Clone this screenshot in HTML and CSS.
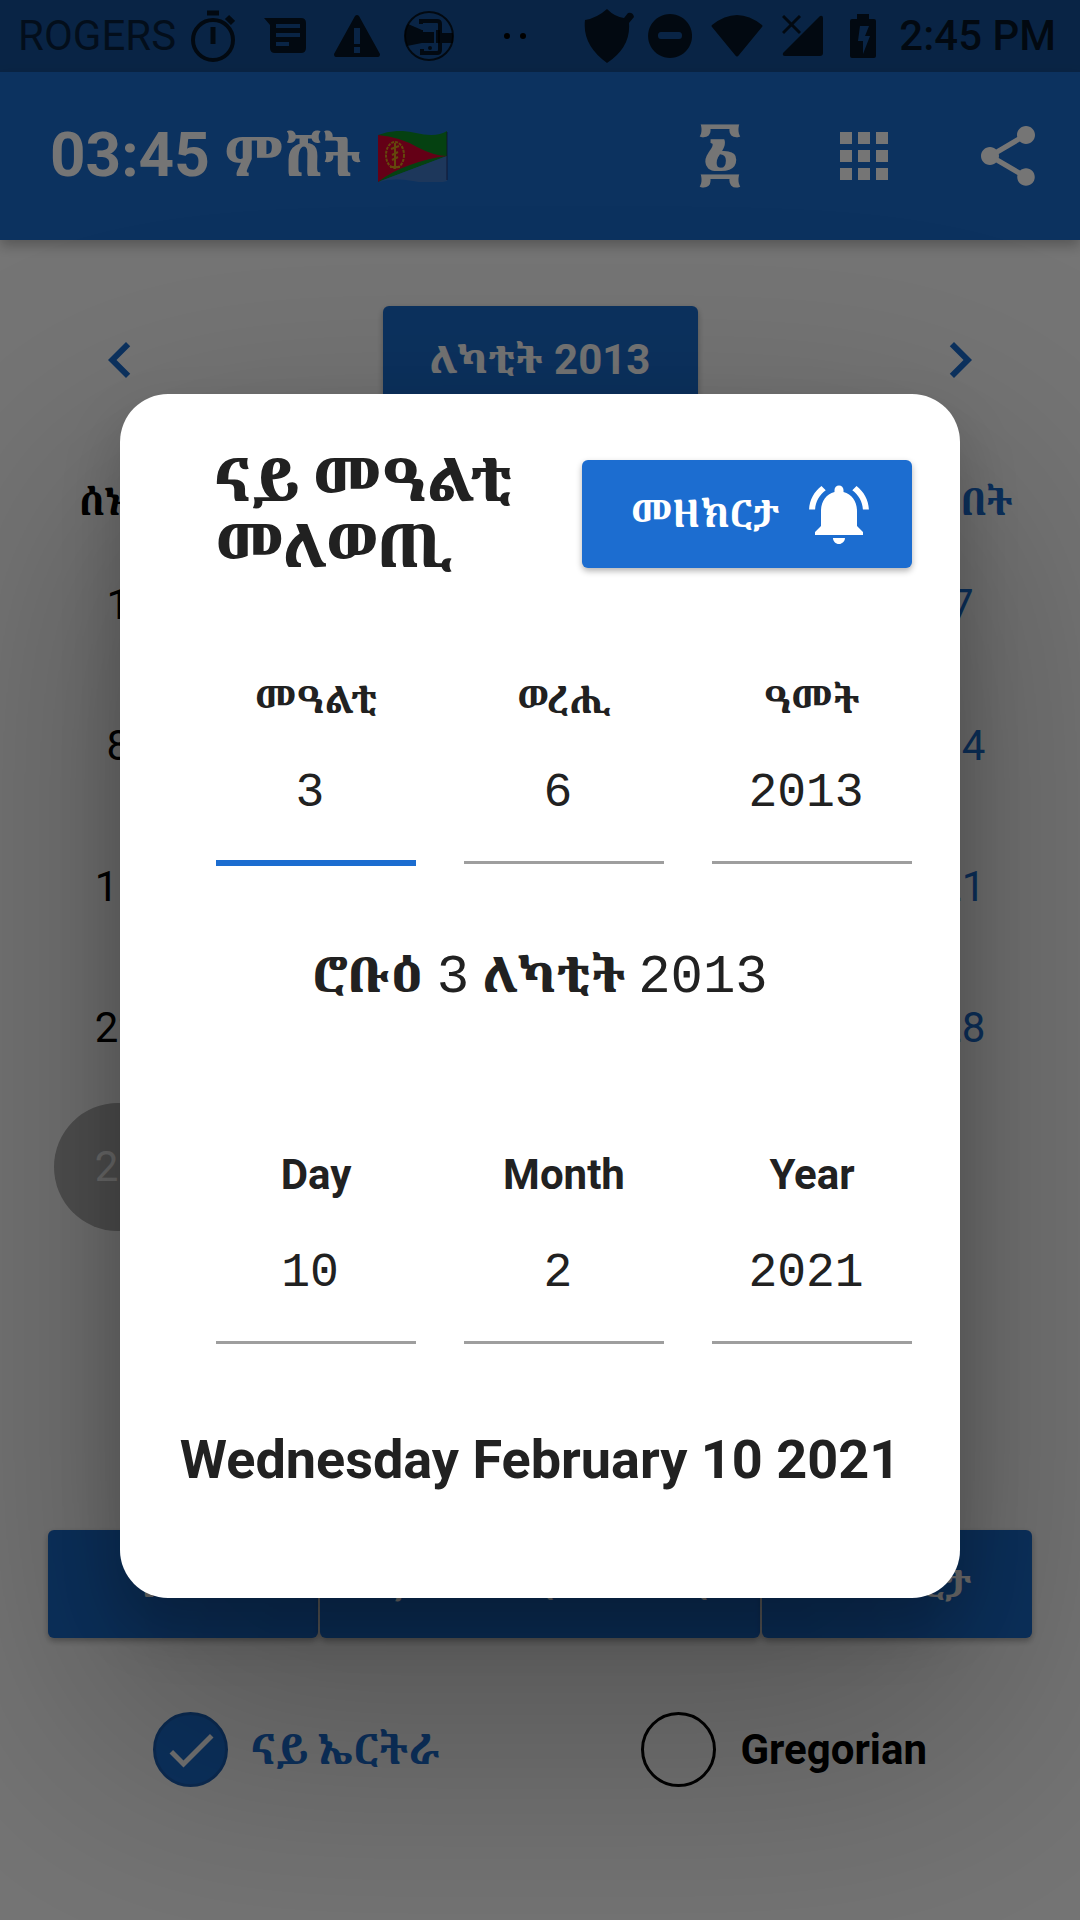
FILE: index.html
```html
<!DOCTYPE html>
<html lang="ti">
<head>
<meta charset="utf-8">
<meta name="viewport" content="width=device-width, initial-scale=1">
<title>ናይ መዓልቲ መለወጢ</title>
<link rel="stylesheet" href="styles.css">
</head>
<body>
<div class="screen">
  <div class="status-bar">
    <span class="carrier">ROGERS</span>
    <svg class="status-icon timer" viewBox="0 0 44 54" aria-hidden="true"><g fill="none" stroke="currentColor" stroke-width="4"><circle cx="22" cy="31" r="20"/><path d="M22 18v17M16 4h12" stroke-width="5"/><path d="M36 8l6 6" stroke-width="6"/></g></svg>
    <svg class="status-icon message" viewBox="0 0 42 36" aria-hidden="true"><path fill="currentColor" fill-rule="evenodd" d="M0 0h37q5 0 5 5v25q0 5-5 5H11q-5 0-5-5V7zM12 6v4h24V6zm0 9v4h24v-4zm0 9v4h13v-4z"/></svg>
    <svg class="status-icon warning" viewBox="0 0 46 42" aria-hidden="true"><path fill="currentColor" fill-rule="evenodd" d="M21 1q2-2 4 0l21 38q0 3-2 3H2q-2 0-2-3zM20 13v16h6V13zm0 19v6h6v-6z"/></svg>
    <svg class="status-icon face" viewBox="0 0 50 50" aria-hidden="true"><circle cx="25" cy="25" r="24" fill="none" stroke="currentColor" stroke-width="2"/><path fill="currentColor" d="M4 13l14 6h18v13H18L3 35Q-2 23 4 13zm34 9h11v10H38z"/><path fill="none" stroke="currentColor" stroke-width="4" d="M17 13v-3h16q3 0 3 3v26q0 3-3 3H18v-4"/><path fill="none" stroke="#155096" stroke-width="2" d="M19 20h12v12"/><circle cx="26" cy="37" r="2" fill="currentColor"/></svg>
    <svg class="dots" viewBox="0 0 22 6" aria-hidden="true"><circle cx="3" cy="3" r="3"/><circle cx="19" cy="3" r="3"/></svg>
    <span class="status-gap"></span>
    <svg class="status-icon shield" viewBox="0 0 50 54" aria-hidden="true"><path fill="currentColor" d="M23 0q8 8 17 9l4-5q5-1 6 4l-5 6q2 24-22 40Q-2 36 1 11 13 9 23 0z"/></svg>
    <svg class="status-icon dnd" viewBox="0 0 44 44" aria-hidden="true"><path fill="currentColor" fill-rule="evenodd" d="M22 0a22 22 0 1 0 .1 0zM13 18h18q3 0 3 3.500t-3 3.500H13q-3 0-3-3.500t3-3.500z"/></svg>
    <svg class="status-icon wifi" viewBox="0 0 52 42" aria-hidden="true"><path fill="currentColor" d="M1 10Q26-10 51 10q1 1 0 2L28 40q-2 3-4 0L1 12q-1-1 0-2z"/></svg>
    <svg class="status-icon signal" viewBox="0 0 42 42" aria-hidden="true"><path fill="currentColor" d="M38 1q3-1 3 2v35q0 3-3 3H3q-3 0-2-3z"/><path stroke="currentColor" stroke-width="3" d="M1 1l17 17M18 1L1 18"/></svg>
    <svg class="status-icon battery" viewBox="0 0 26 44" aria-hidden="true"><path fill="currentColor" fill-rule="evenodd" d="M7 0h12v5h5q2 0 2 2v35q0 2-2 2H2q-2 0-2-2V7q0-2 2-2h5zm3 12L8 27h5v13l7-18h-5l4-10z"/></svg>
    <span class="clock">2:45 PM</span>
  </div>

  <header class="app-bar">
    <h1 class="app-title">03:45 <span class="geez">ምሸት</span></h1>
    <svg class="flag" viewBox="0 0 70 51" role="img" aria-label="Eritrea"><path fill="#0d8f26" d="M0 4Q18-3 38 2t31-2v25L0 51z"/><path fill="#4079c6" d="M0 51L69 25v25q-14 4-34 0T0 51z"/><path fill="#db0030" d="M0 4q22 2 39 12 17 9 30 9-18 2-37 9Q14 40 0 51z"/><ellipse cx="17" cy="24" rx="9" ry="13" fill="none" stroke="#d99b1c" stroke-width="2" stroke-dasharray="3 1"/><path d="M17 12v25M13 18l8-3M14 24l6-3M14 29l6-3M12 36h10" stroke="#d99b1c" stroke-width="2"/><path d="M69 1v48" stroke="#225" stroke-opacity=".4" stroke-width="2"/></svg>
    <button class="icon-button numeral" aria-label="ቁጽሪ">፩</button>
    <button class="icon-button" aria-label="Apps"><svg viewBox="0 0 24 24"><path d="M4 8h4V4H4zm6 12h4v-4h-4zm-6 0h4v-4H4zm0-6h4v-4H4zm6 0h4v-4h-4zm6-10v4h4V4zm-6 4h4V4h-4zm6 6h4v-4h-4zm0 6h4v-4h-4z"/></svg></button>
    <button class="icon-button" aria-label="Share"><svg viewBox="0 0 24 24"><path d="M18 16.080c-.76 0-1.440.3-1.960.77L8.910 12.700c.05-.23.09-.46.09-.7s-.04-.47-.09-.7l7.050-4.110c.54.5 1.250.81 2.040.81 1.660 0 3-1.340 3-3s-1.340-3-3-3-3 1.340-3 3c0 .24.04.47.09.7L8.040 9.810C7.500 9.310 6.790 9 6 9c-1.660 0-3 1.340-3 3s1.340 3 3 3c.79 0 1.500-.31 2.040-.81l7.120 4.160c-.05.21-.08.43-.08.65 0 1.610 1.310 2.920 2.920 2.920s2.920-1.310 2.920-2.920-1.310-2.920-2.920-2.920z"/></svg></button>
  </header>

  <main class="content">
    <div class="month-row">
      <button class="icon-button arrow" aria-label="Previous month"><svg viewBox="0 0 24 24"><path d="M15.410 7.410L14 6l-6 6 6 6 1.410-1.410L10.830 12z"/></svg></button>
      <button class="raised month"><span class="geez">ለካቲት</span> 2013</button>
      <button class="icon-button arrow" aria-label="Next month"><svg viewBox="0 0 24 24"><path d="M10 6L8.590 7.410 13.170 12l-4.580 4.590L10 18l6-6z"/></svg></button>
    </div>
    <table class="calendar">
      <thead><tr><th>ሰኑይ</th><th>ሰሉስ</th><th>ሮቡዕ</th><th>ሓሙስ</th><th>ዓርቢ</th><th>ቀዳም</th><th class="sunday">ሰንበት</th></tr></thead>
      <tbody>
        <tr><td>1</td><td>2</td><td>3</td><td>4</td><td>5</td><td>6</td><td class="sunday">7</td></tr>
        <tr><td>8</td><td>9</td><td>10</td><td>11</td><td>12</td><td>13</td><td class="sunday">14</td></tr>
        <tr><td>15</td><td>16</td><td>17</td><td>18</td><td>19</td><td>20</td><td class="sunday">21</td></tr>
        <tr><td>22</td><td>23</td><td>24</td><td>25</td><td>26</td><td>27</td><td class="sunday">28</td></tr>
        <tr><td><span class="marked">29</span></td><td>30</td><td></td><td></td><td></td><td></td><td></td></tr>
      </tbody>
    </table>
    <div class="actions">
      <button class="raised geez">በዓል</button>
      <button class="raised geez">ናይ መዓልቲ መለወጢ</button>
      <button class="raised geez">መዘክርታ</button>
    </div>
    <div class="calendar-choice">
      <label class="choice selected"><span class="tick"><input type="radio" name="calendar" checked><svg viewBox="0 0 24 24" aria-hidden="true"><path d="M9 16.170L4.830 12l-1.420 1.410L9 19 21 7l-1.410-1.410z"/></svg></span>ናይ ኤርትራ</label>
      <label class="choice"><span class="tick"><input type="radio" name="calendar"></span>Gregorian</label>
    </div>
  </main>

  <div class="scrim">
    <dialog class="converter" open aria-labelledby="converter-title">
      <div class="converter-head">
        <h2 id="converter-title">ናይ መዓልቲ<br>መለወጢ</h2>
        <button class="raised reminder geez">መዘክርታ<svg viewBox="0 0 24 24" aria-hidden="true"><path d="M7.580 4.080L6.150 2.650C3.750 4.480 2.170 7.300 2.030 10.500h2c.15-2.650 1.510-4.970 3.550-6.420zm12.390 6.420h2c-.15-3.200-1.730-6.020-4.120-7.850l-1.420 1.430c2.020 1.450 3.390 3.770 3.540 6.420zM18 11c0-3.070-1.640-5.640-4.500-6.320V4c0-.83-.67-1.500-1.500-1.500s-1.500.67-1.500 1.500v.68C7.630 5.360 6 7.920 6 11v5l-2 2v1h16v-1l-2-2zm-6 11c.14 0 .27-.01.4-.04.65-.14 1.180-.58 1.440-1.180.1-.24.15-.5.15-.78h-4c.01 1.100.9 2 2.010 2z"/></svg></button>
      </div>
      <div class="fields">
        <label class="field geez">መዓልቲ<input class="active" type="text" inputmode="numeric" value="3"></label>
        <label class="field geez">ወረሒ<input type="text" inputmode="numeric" value="6"></label>
        <label class="field geez">ዓመት<input type="text" inputmode="numeric" value="2013"></label>
      </div>
      <p class="result"><span class="geez">ሮቡዕ</span> <span class="mono">3</span> <span class="geez">ለካቲት</span> <span class="mono">2013</span></p>
      <div class="fields">
        <label class="field">Day<input type="text" inputmode="numeric" value="10"></label>
        <label class="field">Month<input type="text" inputmode="numeric" value="2"></label>
        <label class="field">Year<input type="text" inputmode="numeric" value="2021"></label>
      </div>
      <p class="result">Wednesday February 10 2021</p>
    </dialog>
  </div>
</div>
</body>
</html>
```
FILE: styles.css
```css
:root {
  --blue: #1c6dd0;
  --ink: #212121;
  --sans: Roboto, "Noto Serif Ethiopic", "Abyssinica SIL", "Noto Sans Ethiopic", "Noto Sans", sans-serif;
  --mono: "Liberation Mono", monospace;
}
* { box-sizing: border-box; }
body { margin: 0; font-family: var(--sans); font-size: 42px; line-height: 48px; color: #000; background: #fff; }
button { font: inherit; border: 0; margin: 0; padding: 0; cursor: pointer; }
.geez { font-size: 38px; font-weight: 800; }
.screen { position: relative; min-height: 100vh; overflow: hidden; }

.status-bar { display: flex; align-items: center; height: 72px; padding: 0 24px 0 18px; background: #155096; color: rgba(0, 0, 0, .75); }
.status-bar svg { flex: none; }
.carrier { width: 173px; opacity: .8; }
.clock { font-weight: 500; margin-left: 23px; }
.status-gap { flex: 1; }
.timer { width: 44px; height: 54px; }
.message { width: 42px; height: 36px; margin-left: 29px; }
.warning { width: 46px; height: 42px; margin-left: 28px; }
.face { width: 50px; height: 50px; margin-left: 24px; }
.dots { width: 22px; height: 6px; margin-left: 50px; }
.shield { width: 50px; height: 54px; }
.dnd { width: 44px; height: 44px; margin-left: 14px; }
.wifi { width: 52px; height: 42px; margin-left: 19px; }
.signal { width: 42px; height: 42px; margin-left: 19px; }
.battery { width: 26px; height: 44px; margin-left: 26px; }

.app-bar { display: flex; align-items: center; height: 168px; padding-left: 50px; background: var(--blue); color: #fff; box-shadow: 0 6px 12px rgba(0, 0, 0, .25); position: relative; }
.app-title { margin: 0; font-size: 62px; line-height: 72px; font-weight: 700; }
.app-title .geez { font-size: 54px; }
.flag { width: 70px; height: 51px; margin: 0 auto 0 18px; }
.icon-button { display: flex; align-items: center; justify-content: center; width: 144px; height: 144px; background: none; color: inherit; }
.icon-button svg { width: 72px; height: 72px; fill: currentColor; }
.numeral { font-size: 68px; font-weight: 800; }
.arrow { color: var(--blue); }

.content { padding: 48px 48px 0; }
.month-row { display: flex; align-items: center; justify-content: space-between; }
.raised { display: flex; align-items: center; justify-content: center; height: 108px; padding: 0 48px; border-radius: 6px; background: var(--blue); color: #fff; font-weight: 700; white-space: nowrap; box-shadow: 0 3px 6px rgba(0, 0, 0, .3); }
.month { gap: 12px; width: 315px; padding: 0; }

.calendar { width: 100%; table-layout: fixed; border-collapse: collapse; text-align: center; }
.calendar th { height: 102px; padding: 38px 0 0; font-size: 38px; white-space: nowrap; }
.calendar td { padding: 0; height: 141px; }
.calendar tr:last-child td { height: 138px; }
.calendar .sunday { color: var(--blue); }
.marked { display: flex; align-items: center; justify-content: center; width: 128px; height: 128px; margin: 0 auto; border-radius: 50%; background: #b2b2b2; color: #f2f2f2; }

.actions { display: grid; grid-template-columns: 270px 1fr 270px; gap: 2px; margin-top: 294px; }
.actions .raised { padding: 0 12px; }
.calendar-choice { display: flex; justify-content: space-between; padding: 74px 105px; }
.choice { display: flex; align-items: center; gap: 24px; font-weight: 700; }
.choice.selected { color: var(--blue); }
.tick { display: grid; width: 75px; height: 75px; }
.tick > * { grid-area: 1 / 1; place-self: center; }
.tick input { appearance: none; width: 75px; height: 75px; margin: 0; border: 3px solid #000; border-radius: 50%; }
.tick input:checked { background: var(--blue); border-color: #195fb6; }
.tick svg { width: 60px; height: 60px; fill: #fff; }

.scrim { position: absolute; inset: 0; display: flex; align-items: center; justify-content: center; padding: 72px 120px 0; background: rgba(0, 0, 0, .54); }
.converter { position: static; width: 100%; margin: 0; padding: 54px 0 106px; border: 0; border-radius: 48px; background: #fff; color: var(--ink); box-shadow: 0 120px 260px 40px rgba(0, 0, 0, .26), 0 30px 60px rgba(0, 0, 0, .2); }
.converter-head { display: flex; align-items: center; justify-content: space-between; padding: 0 48px 0 96px; }
.converter-head h2 { margin: 0; font-size: 60px; line-height: 66px; font-weight: 800; white-space: nowrap; }
.reminder { gap: 24px; min-width: 330px; padding: 0 36px 0 48px; }
.reminder svg { width: 72px; height: 72px; fill: currentColor; }
.fields { display: grid; grid-template-columns: repeat(3, 1fr); gap: 48px; padding: 98px 48px 0 96px; }
.field { display: block; text-align: center; line-height: 54px; font-weight: 700; }
.field.geez { line-height: 44px; }
.field input { display: block; width: 100%; height: 142px; margin: 0 0 2px; padding: 3px 12px 0 0; border: 0; border-bottom: 3px solid #9e9e9e; border-radius: 0; outline: 0; background: none; color: inherit; font: 48px/54px var(--mono); text-align: center; }
.field input.active { height: 144px; margin: 0; border-bottom: 6px solid var(--blue); }
.result { margin: 0; padding: 76px 0 0; text-align: center; font-size: 54px; line-height: 64px; font-weight: 700; white-space: nowrap; }
.result .geez { font-size: 48px; }
.result + .fields { padding-top: 138px; }
.fields + .result:last-child { padding-top: 82px; }
.mono { font-family: var(--mono); font-weight: 400; }
```
